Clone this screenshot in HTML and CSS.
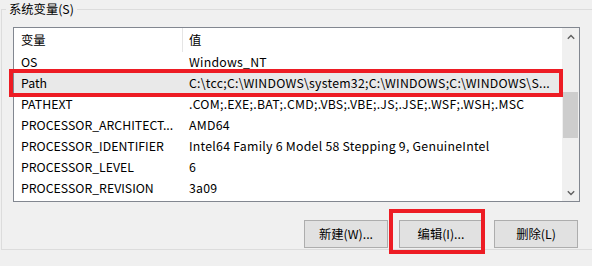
FILE: index.html
```html
<!DOCTYPE html>
<html lang="zh-CN">
<head>
    <meta charset="UTF-8">
    <title>系统变量</title>
    <link rel="stylesheet" href="styles.css">
</head>
<body>
    <fieldset class="group">
        <legend>系统变量(S)</legend>

        <div class="list">
            <div class="table">
                <div class="row head">
                    <div class="cell name">变量</div>
                    <div class="cell value">值</div>
                </div>
                <div class="row">
                    <div class="cell name">OS</div>
                    <div class="cell value">Windows_NT</div>
                </div>
                <div class="row selected">
                    <div class="cell name">Path</div>
                    <div class="cell value">C:\tcc;C:\WINDOWS\system32;C:\WINDOWS;C:\WINDOWS\S...</div>
                </div>
                <div class="row">
                    <div class="cell name">PATHEXT</div>
                    <div class="cell value">.COM;.EXE;.BAT;.CMD;.VBS;.VBE;.JS;.JSE;.WSF;.WSH;.MSC</div>
                </div>
                <div class="row">
                    <div class="cell name">PROCESSOR_ARCHITECT...</div>
                    <div class="cell value">AMD64</div>
                </div>
                <div class="row">
                    <div class="cell name">PROCESSOR_IDENTIFIER</div>
                    <div class="cell value">Intel64 Family 6 Model 58 Stepping 9, GenuineIntel</div>
                </div>
                <div class="row">
                    <div class="cell name">PROCESSOR_LEVEL</div>
                    <div class="cell value">6</div>
                </div>
                <div class="row">
                    <div class="cell name">PROCESSOR_REVISION</div>
                    <div class="cell value">3a09</div>
                </div>
            </div>

            <!-- vertical scrollbar -->
            <div class="scrollbar">
                <div class="arrow">
                    <svg width="8" height="6" viewBox="0 0 8 6"><path d="M0.8 4.8 L4 1.6 L7.2 4.8" fill="none" stroke="#606060" stroke-width="1.4"/></svg>
                </div>
                <div class="track">
                    <div class="thumb"></div>
                </div>
                <div class="arrow">
                    <svg width="8" height="6" viewBox="0 0 8 6"><path d="M0.8 1.2 L4 4.4 L7.2 1.2" fill="none" stroke="#606060" stroke-width="1.4"/></svg>
                </div>
            </div>
        </div>

        <div class="buttons">
            <button class="btn">新建(W)...</button>
            <button class="btn">编辑(I)...</button>
            <button class="btn">删除(L)</button>
        </div>
    </fieldset>

    <!-- red annotation boxes -->
    <div class="mark mark-path"></div>
    <div class="mark mark-edit"></div>
</body>
</html>
```

FILE: styles.css
```css
body {
    margin: 0;
    width: 592px;
    height: 266px;
    overflow: hidden;
    position: relative;
    background-color: #f0f0f0;
    font-family: "Noto Sans CJK SC", "Noto Sans", sans-serif;
    font-size: 12px;
    color: #000;
}
.group {
    margin: 0 0 0 1px;
    padding: 0;
    width: 590px;
    height: 248px;
    border: 1px solid #dcdcdc;
    border-right: none;
    box-sizing: content-box;
}
.group legend {
    margin-left: 4px;
    padding: 0 3px;
    line-height: 18px;
    font-size: 12.3px;
}
.list {
    display: flex;
    margin: 9px 0 0 11px;
    width: 565px;
    height: 173px;
    border: 1px solid #828790;
    background-color: #fff;
    overflow: hidden;
}
.table {
    width: 548px;
    display: flex;
    flex-direction: column;
    font-size: 12.3px;
}
.row {
    display: grid;
    grid-template-columns: 168px 1fr;
    height: 21px;
    line-height: 21px;
}
.row.head {
    height: 24px;
    line-height: 24px;
}
.row.selected {
    background-color: #e9e9e9;
}
.cell {
    white-space: nowrap;
    overflow: hidden;
    text-overflow: ellipsis;
}
.cell.name {
    padding-left: 7px;
}
.cell.value {
    padding-left: 7px;
    padding-right: 6px;
    letter-spacing: 0.25px;
}
.row.head .cell.value {
    border-left: 1px solid #e5e5e5;
    padding-left: 6px;
}
.scrollbar {
    width: 17px;
    display: flex;
    flex-direction: column;
    background-color: #f0f0f0;
}
.arrow {
    height: 17px;
    display: flex;
    align-items: center;
    justify-content: center;
}
.track {
    flex: 1;
    padding: 0 1px;
}
.thumb {
    margin-top: 47px;
    height: 46px;
    background-color: #cdcdcd;
}
.buttons {
    display: flex;
    gap: 11px;
    margin: 18px 0 0 302px;
}
.btn {
    width: 84px;
    height: 28px;
    padding: 0;
    font-family: "Noto Sans CJK SC", "Noto Sans", sans-serif;
    font-size: 12.3px;
    color: #000;
    background-color: #e1e1e1;
    border: 1px solid #adadad;
}
.mark {
    position: absolute;
    border: 4px solid #ed1c24;
    box-sizing: border-box;
}
.mark-path {
    left: 9px;
    top: 69px;
    width: 554px;
    height: 28px;
}
.mark-edit {
    left: 389px;
    top: 209px;
    width: 96px;
    height: 45px;
}
```
